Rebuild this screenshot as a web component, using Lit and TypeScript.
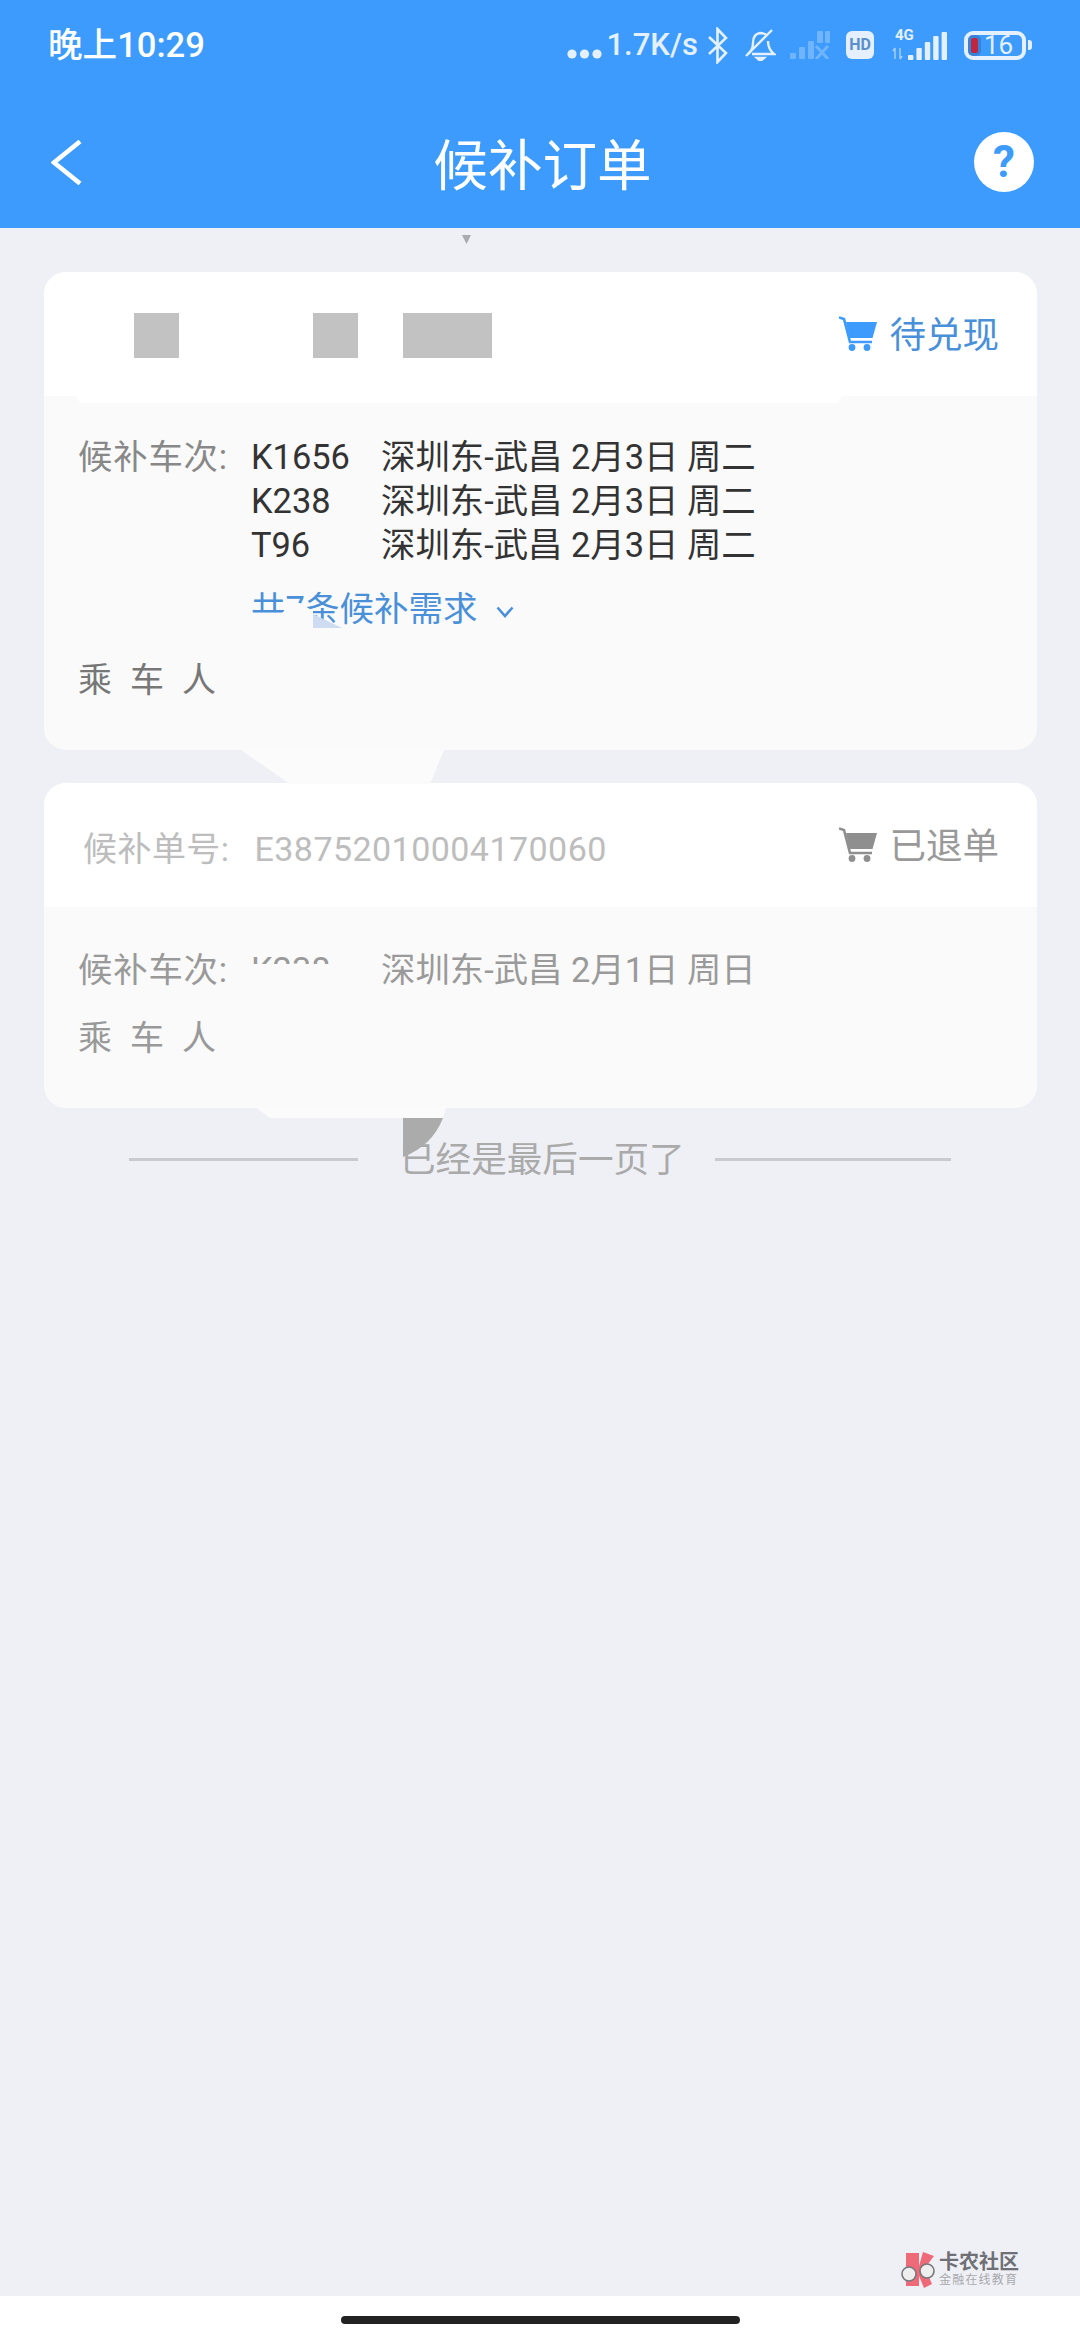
import {html, css, svg, LitElement} from 'lit';
import {customElement} from 'lit/decorators.js';

const cart = html`<svg class="cart" viewBox="0 0 38 36">
  <path d="M0 1.5 L5 3 L11 26 L33 26" fill="none" stroke="currentColor" stroke-width="2.6"/>
  <path d="M7 6 H38 L33.5 22 H10.5 Z" fill="currentColor"/>
  <circle cx="13" cy="31.5" r="3.4" fill="currentColor"/>
  <circle cx="28" cy="31.5" r="3.4" fill="currentColor"/>
</svg>`;

const bars = (x: number, step: number, heights: number[], w: number) =>
  heights.map((h, i) => svg`<rect x=${x + i * step} y=${28 - h} width=${w} height=${h} rx="1"/>`);

// redaction marks and scribbles that sit on top of the page
const overlay = svg`<svg class="overlay" viewBox="0 0 1080 2340">
  <path d="M462 235 H471 L466.5 244 Z" fill="#aaabb0"/>
  <path d="M76 396 H842 L838 403 H80 Z" fill="#fff"/>
  <rect x="134" y="313" width="45" height="45" fill="#c2c2c2"/>
  <rect x="313" y="313" width="45" height="45" fill="#c2c2c2"/>
  <rect x="403" y="313" width="89" height="45" fill="#c2c2c2"/>
  <path d="M244 613 H282 L292 603 H300 L313 611 V634 H244 Z" fill="#fafafb"/>
  <path d="M313 614 L342 628 H313 Z" fill="#cddcf0"/>
  <path d="M241 750 H444 L430 784 H290 Z" fill="#fbfbfc"/>
  <path d="M245 964 H335 V992 H245 Z" fill="#fafafb"/>
  <path d="M255 1107 H446 L443 1118 H270 Z" fill="#fbfbfc"/>
  <path d="M403 1118 H443 Q432 1146 403 1157 Z" fill="#ababab"/>
</svg>`;

const trains = [
  {no: 'K1656', route: '深圳东-武昌 2月3日 周二'},
  {no: 'K238', route: '深圳东-武昌 2月3日 周二'},
  {no: 'T96', route: '深圳东-武昌 2月3日 周二'},
];

@customElement('app-root')
export class AppRoot extends LitElement {
  static styles = css`
    :host {
      display: block;
      position: relative;
      width: 1080px;
      height: 2340px;
      overflow: hidden;
      background: #eff0f5;
      font-family: Roboto, "Noto Sans CJK SC", sans-serif;
      font-size: 34.4px;
      line-height: 44px;
      color: #333;
    }
    .overlay {
      position: absolute;
      left: 0;
      top: 0;
      width: 1080px;
      height: 2340px;
      pointer-events: none;
    }
    .top {
      height: 228px;
      background: #3d9bfd;
      color: #fff;
    }
    .status {
      height: 90px;
      display: flex;
      align-items: center;
      justify-content: space-between;
      padding: 0 48px 0 48px;
    }
    .time {
      font-weight: 500;
      font-size: 34.6px;
    }
    .tray {
      display: flex;
      align-items: center;
      color: #e4f0fd;
    }
    .tray svg {
      display: block;
    }
    .tray .dots {
      margin-top: 18px;
    }
    .speed {
      margin: 0 9px 0 5px;
      font-size: 31px;
      font-weight: 500;
      white-space: nowrap;
    }
    .bell { margin: 0 14px 0 17px; }
    .hd {
      width: 28px;
      height: 28px;
      margin: 0 18px 0 16px;
      border-radius: 6px;
      background: #e4f0fd;
      color: #5b8fcb;
      font-size: 16px;
      line-height: 28px;
      font-weight: 700;
      text-align: center;
    }
    .battery {
      position: relative;
      width: 62px;
      height: 29px;
      margin: 0 2px 0 16px;
      box-sizing: border-box;
      border: 4px solid #e4f0fd;
      border-radius: 9px;
      display: flex;
      align-items: center;
      font-size: 26px;
      line-height: 21px;
      gap: 6px;
      padding-left: 3px;
    }
    .battery i {
      width: 7px;
      height: 15px;
      border-radius: 2px;
      background: #c0263e;
      box-shadow: 0 0 0 3px rgba(40, 70, 130, 0.28);
    }
    .tip {
      width: 4px;
      height: 10px;
      border-radius: 0 3px 3px 0;
      background: #e4f0fd;
    }
    .nav {
      height: 138px;
      box-sizing: border-box;
      padding: 6px 46px 0 51px;
      display: grid;
      grid-template-columns: 1fr auto 1fr;
      align-items: center;
    }
    .title {
      padding-top: 8px;
      font-size: 54.6px;
      line-height: 70px;
    }
    .back {
      display: block;
      width: 31px;
      height: 45px;
    }
    .help {
      justify-self: end;
      width: 60px;
      height: 60px;
      border-radius: 50%;
      background: #fff;
      color: #3d9bfd;
      font-size: 44px;
      line-height: 60px;
      font-weight: 700;
      text-align: center;
    }
    .list {
      display: flex;
      flex-direction: column;
      gap: 33px;
      padding: 44px 43px 0 44px;
    }
    .card {
      border-radius: 22px;
      overflow: hidden;
      background: #fafafb;
    }
    .head {
      height: 124px;
      box-sizing: border-box;
      background: #fff;
      padding: 0 38px 0 39px;
      display: flex;
      align-items: center;
      justify-content: space-between;
    }
    .order {
      padding-top: 7px;
      font-size: 34px;
      color: #bdbdbd;
      letter-spacing: 0.45px;
    }
    .order b {
      margin-left: 25px;
      font-weight: 400;
    }
    .state {
      display: flex;
      align-items: center;
      gap: 13px;
      font-size: 36.5px;
      color: #4a90d9;
    }
    .state span {
      padding-top: 4px;
    }
    .cart {
      display: block;
      width: 38px;
      height: 36px;
      color: #3d9bfd;
    }
    .state.off { color: #999; }
    .state.off .cart { color: #8f8f8f; }
    .body {
      padding: 39px 34px 48px;
    }
    .body.off {
      padding-top: 41px;
    }
    .row {
      display: grid;
      grid-template-columns: 173px 130px auto;
      justify-content: start;
      white-space: nowrap;
    }
    .label {
      color: #888;
      letter-spacing: 0.8px;
    }
    .more {
      display: flex;
      align-items: center;
      gap: 19px;
      margin: 20px 0 0 173px;
      font-size: 34.5px;
      color: #4a90d9;
    }
    .more svg {
      display: block;
      width: 18px;
      height: 12px;
      margin-top: 6px;
    }
    .rider {
      margin-top: 27px;
      font-size: 34px;
      color: #777;
      letter-spacing: 18px;
    }
    .off .row { color: #9a9a9a; }
    .off .label { color: #999; }
    .off .rider {
      margin-top: 24px;
      color: #999;
    }
    .end {
      display: flex;
      align-items: center;
      margin-top: 28px;
      padding: 0 129px;
      color: #aaa;
      font-size: 35.6px;
    }
    .end i {
      flex: 1;
      height: 3px;
      background: #c9cad0;
    }
    .end i:first-child {
      flex: 0 0 229px;
    }
    .end span {
      margin: 0 30px 0 42px;
      padding-top: 2px;
    }
    .logo {
      position: absolute;
      left: 899px;
      top: 2250px;
      display: flex;
      align-items: center;
      gap: 4px;
    }
    .logo svg {
      display: block;
      width: 36px;
      height: 38px;
    }
    .brand {
      font-size: 20px;
      line-height: 22px;
      font-weight: 700;
      color: #6f7076;
      white-space: nowrap;
    }
    .brand small {
      display: block;
      font-size: 12px;
      line-height: 14px;
      font-weight: 400;
      letter-spacing: 1.2px;
      color: #a9a9ae;
    }
    .bottom {
      position: absolute;
      left: 0;
      right: 0;
      bottom: 0;
      height: 44px;
      background: #fff;
      display: flex;
      justify-content: center;
      align-items: flex-end;
      padding-bottom: 16px;
      box-sizing: border-box;
    }
    .bottom i {
      width: 399px;
      height: 8px;
      border-radius: 4px;
      background: #222;
    }
  `;

  render() {
    return html`
      <div class="top">
        <div class="status">
          <span class="time">晚上10:29</span>
          <div class="tray">
            <svg class="dots" width="35" height="12" viewBox="0 0 35 12" fill="currentColor">
              <circle cx="5" cy="6" r="4.6"/><circle cx="17.5" cy="6" r="4.6"/><circle cx="30" cy="6" r="4.6"/>
            </svg>
            <span class="speed">1.7K/s</span>
            <svg width="21" height="37" viewBox="0 0 21 37" fill="none" stroke="currentColor" stroke-width="2.6">
              <path d="M2 10 L19 26 L10.5 35 V2 L19 11 L2 27"/>
            </svg>
            <svg class="bell" width="31" height="32" viewBox="0 0 31 32" fill="none" stroke="currentColor" stroke-width="2.4">
              <path d="M3 25 Q8 21 8 14 Q8 5 15 4 Q20 4 22 7 M23 12 Q23 20 29 25 H7"/>
              <path d="M1 27 L27 1"/>
              <path d="M12 29 H19 L15.5 32 Z" fill="currentColor"/>
            </svg>
            <svg width="40" height="28" viewBox="0 0 40 28" fill="currentColor" opacity="0.3">
              ${bars(0, 9, [6, 12, 18], 6)}
              <rect x="27" y="0" width="6" height="12" rx="1"/>
              <rect x="35" y="0" width="5" height="12" rx="1"/>
              <path d="M26 15 L38 28 M38 15 L26 28" stroke="currentColor" stroke-width="3"/>
            </svg>
            <span class="hd">HD</span>
            <svg width="56" height="40" viewBox="0 0 56 40" fill="currentColor">
              <text x="3" y="15" font-size="15" font-weight="700" font-family="Roboto, sans-serif">4G</text>
              <path d="M3 34 V23 M3 23 L1 26 M8 23 V34 M8 34 L10 31" fill="none" stroke="currentColor" stroke-width="1.5" opacity="0.6"/>
              <g transform="translate(0 7)">
                ${bars(16, 8.4, [5, 12, 18, 24, 28], 5.4)}
              </g>
            </svg>
            <div class="battery"><i></i>16</div>
            <div class="tip"></div>
          </div>
        </div>
        <div class="nav">
          <svg class="back" viewBox="0 0 31 45" fill="none" stroke="#fff" stroke-width="4.6">
            <path d="M29 1.5 L3 22.5 L29 43.5"/>
          </svg>
          <span class="title">候补订单</span>
          <span class="help">?</span>
        </div>
      </div>

      <div class="list">
        <div class="card">
          <div class="head">
            <span></span>
            <div class="state">${cart}<span>待兑现</span></div>
          </div>
          <div class="body">
            ${trains.map((t, i) => html`
              <div class="row">
                <span class="label">${i === 0 ? '候补车次:' : ''}</span>
                <span>${t.no}</span>
                <span>${t.route}</span>
              </div>
            `)}
            <div class="more">
              共7条候补需求
              <svg viewBox="0 0 18 12" fill="none" stroke="currentColor" stroke-width="2.6"><path d="M1.5 1.5 L9 10 L16.5 1.5"/></svg>
            </div>
            <div class="rider">乘车人</div>
          </div>
        </div>

        <div class="card">
          <div class="head">
            <span class="order">候补单号:<b>E38752010004170060</b></span>
            <div class="state off">${cart}<span>已退单</span></div>
          </div>
          <div class="body off">
            <div class="row">
              <span class="label">候补车次:</span>
              <span>K238</span>
              <span>深圳东-武昌 2月1日 周日</span>
            </div>
            <div class="rider">乘车人</div>
          </div>
        </div>
      </div>

      <div class="end"><i></i><span>已经是最后一页了</span><i></i></div>

      ${overlay}

      <div class="logo">
        <svg viewBox="0 0 36 38">
          <path d="M7 3 H20 V36 H7 Z M20 16 L24 2 L35 6 L26 18 L33 34 L25 38 L20 26 Z" fill="#ee6a78"/>
          <circle cx="10" cy="24" r="7" fill="#eee" stroke="#77777c" stroke-width="1.6"/>
          <circle cx="28" cy="21" r="7" fill="#eee" stroke="#77777c" stroke-width="1.6"/>
        </svg>
        <div class="brand">卡农社区<small>金融在线教育</small></div>
      </div>

      <div class="bottom"><i></i></div>
    `;
  }
}
